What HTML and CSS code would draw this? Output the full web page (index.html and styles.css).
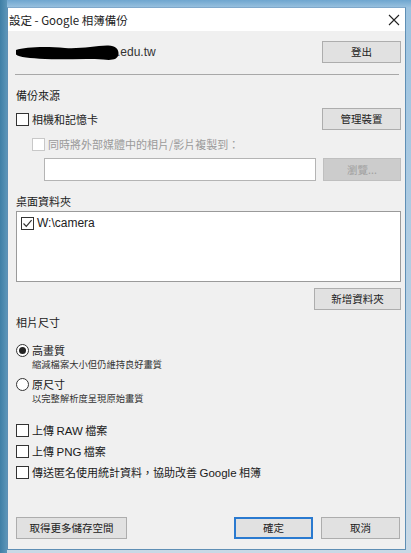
FILE: index.html
```html
<!DOCTYPE html>
<html lang="zh-Hant">
<head>
<meta charset="utf-8">
<title>設定 - Google 相簿備份</title>
<link rel="stylesheet" href="styles.css">
</head>
<body>
<div class="desktop">
  <div class="window">
    <div class="titlebar">
      <span class="title">設定 - Google 相簿備份</span>
      <svg class="close" width="12" height="12" viewBox="0 0 12 12"><path d="M1 1 L11 11 M11 1 L1 11" stroke="#222" stroke-width="1.1" fill="none"/></svg>
    </div>
    <div class="content">
      <div class="row account">
        <div class="email">
          <svg class="redact" width="104" height="16" viewBox="0 0 104 16"><path d="M1 5 C 10 2, 30 1, 50 3 C 65 4, 80 1, 92 0.5 C 100 0, 104 4, 103.5 9 C 103 15, 96 15.5, 88 14.5 C 70 13, 50 15, 30 14 C 15 13, 4 12.5, 1 9.5 Z" fill="#000"/></svg><span>.edu.tw</span>
        </div>
        <button class="btn w79">登出</button>
      </div>
      <div class="sep"></div>

      <div class="heading h-source">備份來源</div>
      <div class="row cam-row">
        <label class="check"><span class="box"></span><span>相機和記憶卡</span></label>
        <button class="btn w79">管理裝置</button>
      </div>
      <div class="sub-check disabled">
        <label class="check"><span class="box"></span><span>同時將外部媒體中的相片/影片複製到：</span></label>
      </div>
      <div class="row path-row">
        <div class="textbox"></div>
        <button class="btn w77 disabled-btn">瀏覽...</button>
      </div>

      <div class="heading h-desk">桌面資料夾</div>
      <div class="listbox">
        <label class="check"><span class="box checked"><svg width="11" height="11" viewBox="0 0 11 11"><path d="M1.5 5.5 L4.3 8.3 L9.6 2.2" stroke="#333" stroke-width="1.2" fill="none"/></svg></span><span class="latin">W:\camera</span></label>
      </div>
      <div class="row add-row">
        <button class="btn w87">新增資料夾</button>
      </div>

      <div class="heading h-size">相片尺寸</div>
      <div class="radio-item first">
        <label class="radio"><span class="circle on"></span><span>高畫質</span></label>
        <div class="hint">縮減檔案大小但仍維持良好畫質</div>
      </div>
      <div class="radio-item">
        <label class="radio"><span class="circle"></span><span>原尺寸</span></label>
        <div class="hint">以完整解析度呈現原始畫質</div>
      </div>

      <div class="opts">
        <label class="check"><span class="box"></span><span>上傳 <span class="latin">RAW</span> 檔案</span></label>
        <label class="check"><span class="box"></span><span>上傳 <span class="latin">PNG</span> 檔案</span></label>
        <label class="check"><span class="box"></span><span>傳送匿名使用統計資料，協助改善 <span class="latin">Google</span> 相簿</span></label>
      </div>

      <div class="row footer">
        <button class="btn w111">取得更多儲存空間</button>
        <div class="footer-right">
          <button class="btn w79 default">確定</button>
          <button class="btn w79">取消</button>
        </div>
      </div>
    </div>
  </div>
</div>
</body>
</html>
```
FILE: styles.css
```css
* { box-sizing: border-box; }
html, body { margin: 0; padding: 0; }
body {
  width: 411px;
  height: 553px;
  overflow: hidden;
  background: linear-gradient(180deg, #6fa6cf 0px, #9cc3e0 8px, #c9d9e6 553px);
  font-family: "Noto Sans CJK TC", "Noto Sans", "Liberation Sans", sans-serif;
  color: #1a1a1a;
}
.desktop {
  padding: 7px 0 0 7px;
  background: linear-gradient(90deg, #3f7fa6 0, #5c95b8 7px, transparent 7px);
  height: 553px;
}
.window {
  width: 399px;
  height: 543px;
  background: #f0f0f0;
  border: 1px solid #5f8fb5;
  border-top: 1px solid #7fa8cb;
  display: flex;
  flex-direction: column;
}
.titlebar {
  height: 23px;
  background: #ffffff;
  display: flex;
  align-items: center;
  justify-content: space-between;
  padding: 0 5px 0 1px;
}
.title { font-size: 11.5px; line-height: 14px; color: #222; }
.close { margin-top: 1px; }
.content {
  padding: 10px 4px 0 8px;
  display: flex;
  flex-direction: column;
  font-size: 11px;
}
.row { display: flex; align-items: center; justify-content: space-between; }
.account { height: 22px; }
.email { display: flex; align-items: center; font-family: "Liberation Sans", "Noto Sans", sans-serif; font-size: 12px; color: #333; }
.redact { margin-left: -1px; margin-top: 1px; }
.email span { margin-left: -2px; }
.sep { height: 1px; background: #a8a8a8; margin: 11px 2px 0 -1px; }
.heading { font-size: 11px; line-height: 16px; color: #1a1a1a; }
.h-source { margin-top: 12px; }
.cam-row { margin-top: 5px; height: 22px; }
.sub-check { margin-top: 7px; margin-left: 16px; height: 14px; display: flex; align-items: center; }
.disabled { color: #9a9a9a; }
.disabled .box { border-color: #c8c8c8; }
.path-row { margin-top: 7px; height: 23px; }
.textbox { margin-left: 28px; width: 272px; height: 23px; background: #fff; border: 1px solid #b4b4b4; }
.h-desk { margin-top: 12px; }
.listbox { margin-top: 2px; height: 71px; background: #fff; border: 1px solid #9a9a9a; padding: 3px 0 0 4px; }
.add-row { margin-top: 6px; height: 22px; justify-content: flex-end; }
.h-size { margin-top: 4px; }
.radio-item { display: flex; flex-direction: column; }
.radio-item.first { margin-top: 12px; }
.radio-item + .radio-item { margin-top: 6px; }
.hint { margin-left: 16px; font-size: 9.3px; line-height: 12px; color: #333; }
.opts { margin-top: 18px; display: flex; flex-direction: column; gap: 4px; }
.footer { margin-top: 36px; height: 22px; }
.footer-right { display: flex; gap: 8px; margin-right: 1px; }

.check, .radio { display: flex; align-items: center; gap: 3px; line-height: 16px; font-size: 11px; }
.box {
  width: 13px; height: 13px;
  border: 1px solid #333;
  background: #fff;
  display: inline-flex; align-items: center; justify-content: center;
  flex: none;
}
.latin { font-family: "Liberation Sans", "Noto Sans", sans-serif; font-size: 11.5px; }
.listbox .latin { font-size: 12px; color: #222; }
.circle {
  width: 13px; height: 13px; border-radius: 50%;
  border: 1px solid #333; background: #fff;
  display: inline-flex; align-items: center; justify-content: center; flex: none;
}
.circle.on::after { content: ""; width: 7px; height: 7px; border-radius: 50%; background: #222; }

.btn {
  height: 22px;
  background: #e1e1e1;
  border: 1px solid #adadad;
  font-family: "Noto Sans CJK TC", "Noto Sans", sans-serif;
  font-size: 10.5px;
  color: #222;
  padding: 0;
  line-height: 20px;
}
.w79 { width: 79px; }
.w77 { width: 78px; height: 23px; }
.w87 { width: 87px; }
.w111 { width: 111px; }
.disabled-btn { background: #cccccc; border-color: #bfbfbf; color: #a0a0a0; }
.default { border: 1px solid #2a7ad0; box-shadow: inset 0 0 0 1px #2a7ad0; }
```
